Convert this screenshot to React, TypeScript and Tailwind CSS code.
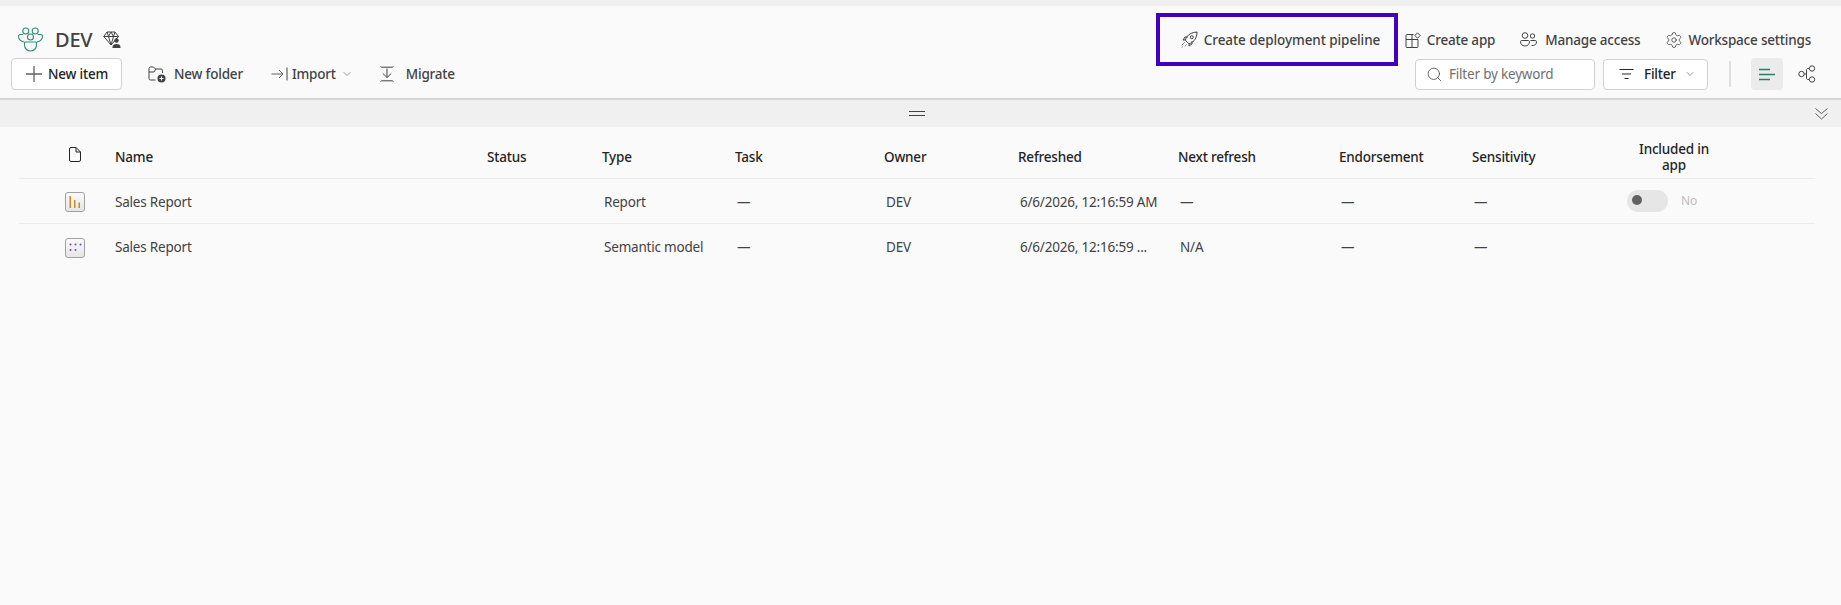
import React from "react";
import { ChevronDown, Search, Settings } from "lucide-react";

const font = { fontFamily: '"Noto Sans", "Open Sans", sans-serif' };

function Team() {
  return (
    <svg width="25" height="25" viewBox="0 0 25 25" fill="none" stroke="#2f8f78" strokeWidth="1.100">
      <circle cx="7.800" cy="4" r="3" />
      <circle cx="17.200" cy="4" r="3" />
      <circle cx="12.500" cy="10" r="3" />
      <path d="M5.200 7.500H2.200c-1 0-1.700.7-1.700 1.600 0 2.900 2 5.200 5.500 5.900" />
      <path d="M19.800 7.500h3c1 0 1.700.7 1.700 1.600 0 2.900-2 5.200-5.500 5.900" />
      <path d="M7.200 15h10.600c.4 0 .7.300.7.700v2.300c0 3.300-2.700 6-6 6s-6-2.700-6-6v-2.300c0-.4.300-.7.700-.7z" />
    </svg>
  );
}
function Diamond() {
  return (
    <svg width="18" height="17" viewBox="0 0 18 17" fill="none" stroke="#424242" strokeWidth="1">
      <path d="M4 1h8l3.500 4.500L8 14 .8 5.500z" />
      <path d="M.8 5.500h14.700M5.500 5.500 8 14l2.500-8.500M4 1l1.500 4.500L8 1l2.500 4.500L12 1" />
      <circle cx="13.500" cy="9.500" r="2.200" fill="#424242" stroke="none" />
      <path d="M9.500 16c0-2 1.500-3 4-3s4 1 4 3v1h-8z" fill="#424242" stroke="none" />
    </svg>
  );
}
function FolderAdd() {
  return (
    <svg width="18" height="17" viewBox="0 0 18 17" fill="none">
      <path d="M7.500 14H2.500A1.500 1.500 0 0 1 1 12.500v-10A1.500 1.500 0 0 1 2.500 1h3L7.500 3H13a1.500 1.500 0 0 1 1.500 1.500V7M1 6h5l2-3" stroke="#424242" strokeWidth="1" />
      <circle cx="13.500" cy="12.500" r="4" fill="#424242" />
      <path d="M13.500 10.500v4M11.500 12.500h4" stroke="#fff" strokeWidth="1" />
    </svg>
  );
}
function ImportIcon() {
  return (
    <svg width="17" height="16" viewBox="0 0 17 16" fill="none" stroke="#616161" strokeWidth="1">
      <path d="M.5 8h11M8 4l4 4-4 4" />
      <path d="M16 1.500v13" stroke="#424242" />
    </svg>
  );
}
function MigrateIcon() {
  return (
    <svg width="14" height="18" viewBox="0 0 14 18" fill="none" stroke="#424242" strokeWidth="1">
      <path d="M.500 1.500c.500.500 1 .7 1.500.7h10c.500 0 1-.2 1.500-.7M.500 16.500c.500-.500 1-.7 1.500-.7h10c.500 0 1 .2 1.500.7" />
      <path d="M7 3.500v9M2.800 8.500 7 12.500l4.200-4" />
    </svg>
  );
}
function Rocket() {
  return (
    <svg width="17" height="17" viewBox="0 0 17 17" fill="none" stroke="#424242" strokeWidth="1">
      <path d="M6 10.800 4.300 9.200c1-3.400 3.400-7.500 11.800-8.200-.6 8.400-4.800 10.800-8.200 11.800z" />
      <circle cx="10.800" cy="6.200" r="1.500" />
      <path d="M4.600 8.800 2 9l2-3h3M8.200 12.500 8 15l3-2v-3" />
      <path d="M3.500 11.500.8 14.200M5.500 13.500l-2 2M1.500 16 .8 16.500" strokeDasharray="1.500 1" />
    </svg>
  );
}
function AppIcon() {
  return (
    <svg width="16" height="16" viewBox="0 0 16 16" fill="none" stroke="#424242" strokeWidth="1">
      <path d="M8.500 2.500H2a1 1 0 0 0-1 1v11a1 1 0 0 0 1 1h10a1 1 0 0 0 1-1V7.500H1M7 2.500v13" />
      <path d="m12.500.8 2.700 2.700-2.700 2.700-2.700-2.700z" />
    </svg>
  );
}
function People() {
  return (
    <svg width="17" height="15" viewBox="0 0 17 15" fill="none" stroke="#424242" strokeWidth="1">
      <circle cx="5" cy="3.500" r="2.800" />
      <circle cx="12.500" cy="4" r="2.200" />
      <path d="M1.700 8.500h6.600c.6 0 1.200.5 1.200 1.200 0 2.300-1.800 4.300-4.500 4.300S.5 12 .5 9.700c0-.7.600-1.200 1.200-1.200z" />
      <path d="M11.500 13.500c2.800.4 5-1 5-3.700 0-.7-.5-1.300-1.200-1.300H10.500" />
    </svg>
  );
}
function FilterLines() {
  return (
    <svg width="15" height="12" viewBox="0 0 15 12" fill="none" stroke="#242424" strokeWidth="1">
      <path d="M.5 1.500h14M3 6h9M5.500 10.500h4" />
    </svg>
  );
}
function ListIcon() {
  return (
    <svg width="16" height="13" viewBox="0 0 16 13" fill="none" stroke="#2a7d6a" strokeWidth="1.500">
      <path d="M0 1.500h11M0 6.500h16M0 11.500h11" />
    </svg>
  );
}
function Lineage() {
  return (
    <svg width="18" height="18" viewBox="0 0 18 18" fill="none" stroke="#424242" strokeWidth="1">
      <circle cx="3.500" cy="9" r="2.700" />
      <circle cx="14" cy="3.500" r="2.700" />
      <circle cx="14" cy="14.500" r="2.700" />
      <path d="M6.200 9h2.300V5c0-1 .6-1.500 1.500-1.500h1.300M8.500 9v4c0 1 .6 1.500 1.500 1.500h1.300" />
    </svg>
  );
}
function FileIcon() {
  return (
    <svg width="12" height="15" viewBox="0 0 12 15" fill="none" stroke="#242424" strokeWidth="1">
      <path d="M2 .5h5L11.500 5v8A1.500 1.500 0 0 1 10 14.500H2A1.500 1.500 0 0 1 .5 13V2A1.500 1.500 0 0 1 2 .5zM7 .5V5h4.500" />
    </svg>
  );
}
function PlusIcon() {
  return (
    <svg width="16" height="16" viewBox="0 0 16 16" fill="none" stroke="#616161" strokeWidth="1.300">
      <path d="M8 0v16M0 8h16" />
    </svg>
  );
}
function DoubleChevron() {
  return (
    <svg width="13" height="12" viewBox="0 0 13 12" fill="none" stroke="#616161" strokeWidth="1">
      <path d="m.5.500 6 5 6-5M.5 5.500l6 5.500 6-5.500" />
    </svg>
  );
}
function TileReport() {
  return (
    <div className="flex h-5 w-5 items-center justify-center rounded-[3px] border border-[#a0a0a0] bg-gradient-to-b from-[#fafafa] to-[#e6e6e6]">
      <svg width="12" height="13" viewBox="0 0 12 13">
        <rect x="0.500" y="0" width="1.500" height="12" fill="#c58a2e" />
        <rect x="5" y="4" width="1.500" height="8" fill="#c58a2e" />
        <rect x="9.500" y="6.500" width="1.500" height="5.500" fill="#c58a2e" />
      </svg>
    </div>
  );
}
function TileModel() {
  return (
    <div className="flex h-5 w-5 items-center justify-center rounded-[3px] border border-[#a0a0a0] bg-gradient-to-b from-[#fafafa] to-[#e6e6e6]">
      <svg width="13" height="9" viewBox="0 0 13 9" fill="#7a45c0">
        <circle cx="1.500" cy="1.500" r="1" />
        <circle cx="6.500" cy="1.500" r="1" />
        <circle cx="11.500" cy="1.500" r="1" />
        <circle cx="1.500" cy="7" r="1" />
        <circle cx="6.500" cy="7" r="1" />
      </svg>
    </div>
  );
}

const gridCols = "grid grid-cols-[96px_372px_115px_133px_149px_134px_160px_161px_133px_148px_108px_87px]";

function Row({ icon, type, refreshed, next, toggle, last }: { icon: React.ReactNode; type: string; refreshed: string; next: string; toggle?: boolean; last?: boolean }) {
  return (
    <div className={`${gridCols} h-[45px] items-center pt-[2px] text-[13.5px] text-[#424242] ${last ? "" : "border-b border-[#ebebeb]"}`}>
      <div className="flex justify-end pr-[30px]">{icon}</div>
      <div>Sales Report</div>
      <div />
      <div className="pl-[2px]">{type}</div>
      <div className="pl-[2px]">—</div>
      <div className="pl-[2px]">DEV</div>
      <div className="pl-[2px]">{refreshed}</div>
      <div className="pl-[2px]">{next}</div>
      <div className="pl-[2px]">—</div>
      <div className="pl-[2px]">—</div>
      <div className="col-span-2">
        {toggle && (
          <div className="-mt-[3px] flex items-center gap-[13px] pl-[7px]">
            <div className="flex h-[22px] w-[41px] items-start rounded-full bg-[#e6e6e6] pl-[5px] pt-[5px]">
              <div className="h-[10px] w-[10px] rounded-full bg-[#616161]" />
            </div>
            <span className="text-[12px] text-[#bdbdbd]">No</span>
          </div>
        )}
      </div>
    </div>
  );
}

export default function App() {
  return (
    <div style={font} className="flex h-[605px] w-[1841px] flex-col overflow-hidden bg-[#fafafa] tracking-[-0.2px]">
      <div className="h-[6px] bg-[#f0f0f0]" />
      <header className="flex h-[94px] justify-between border-b-2 border-[#d6d6d6] pl-[11px] pr-[26px]">
        <div className="flex flex-col">
          <div className="mt-[17px] flex h-[35px] items-center pb-[2px] pl-[7px]">
            <Team />
            <span className="ml-[12px] text-[20px] font-medium text-[#424242]">DEV</span>
            <span className="ml-[11px]"><Diamond /></span>
          </div>
          <div className="flex h-[32px] items-center text-[13.5px] font-medium text-[#424242]">
            <button className="flex h-[32px] w-[111px] items-center rounded border border-[#d1d1d1] bg-white pl-[14px] text-[#242424]">
              <PlusIcon />
              <span className="ml-[6px]">New item</span>
            </button>
            <span className="ml-[26px]"><FolderAdd /></span>
            <span className="ml-[8px]">New folder</span>
            <span className="ml-[28px]"><ImportIcon /></span>
            <span className="ml-[4px]">Import</span>
            <ChevronDown size={12} strokeWidth={1.3} color="#616161" className="ml-[5px]" />
            <span className="ml-[27px]"><MigrateIcon /></span>
            <span className="ml-[12px]">Migrate</span>
          </div>
        </div>
        <div className="flex flex-col items-end">
          <div className="mr-[4px] mt-[7px] flex h-[53px] items-center text-[13.5px] font-medium text-[#424242]">
            <div className="flex h-[53px] w-[242px] items-center border-4 border-[#4100bd] pl-[21px]">
              <Rocket />
              <span className="ml-[6px] mt-[2px] tracking-[-0.08px]">Create deployment pipeline</span>
            </div>
            <span className="ml-[7px]"><AppIcon /></span>
            <span className="ml-[6px] mt-[2px]">Create app</span>
            <span className="ml-[25px]"><People /></span>
            <span className="ml-[8px] mt-[2px]">Manage access</span>
            <span className="ml-[25px]"><Settings size={18} strokeWidth={1.1} color="#424242" /></span>
            <span className="ml-[5px] mt-[2px]">Workspace settings</span>
          </div>
          <div className="-mt-[8px] flex h-[32px] items-center">
            <div className="flex h-[31px] w-[180px] items-center rounded border border-[#d1d1d1] bg-white pl-[10px] text-[13.5px] text-[#707070]">
              <Search size={17} strokeWidth={1.1} color="#424242" />
              <span className="ml-[6px]">Filter by keyword</span>
            </div>
            <div className="ml-[8px] flex h-[31px] w-[105px] items-center rounded border border-[#d1d1d1] bg-white pl-[15px] text-[13.5px] font-medium text-[#242424]">
              <FilterLines />
              <span className="ml-[10px]">Filter</span>
              <ChevronDown size={12} strokeWidth={1.3} color="#616161" className="ml-[8px]" />
            </div>
            <div className="ml-[21px] h-[26px] w-[2px] bg-[#e0e0e0]" />
            <div className="ml-[20px] flex h-[32px] w-[32px] items-center justify-center rounded bg-[#ebebeb]">
              <ListIcon />
            </div>
            <span className="ml-[15px] -mr-[1px]"><Lineage /></span>
          </div>
        </div>
      </header>
      <div className="relative flex h-[27px] items-center justify-center bg-[#f0f0f0]">
        <div className="-ml-[7px] h-[5px] w-[16px] border-y border-[#424242]" />
        <span className="absolute right-[13px] top-[8px]"><DoubleChevron /></span>
      </div>
      <div className="pl-[19px] pr-[26px]">
        <div className={`${gridCols} h-[52px] items-center border-b border-[#ebebeb] text-[13.5px] font-medium text-[#242424]`}>
          <div className="flex justify-end pr-[34px] pt-[4px]"><FileIcon /></div>
          <div className="pt-[9px]">Name</div>
          <div className="pt-[9px]">Status</div>
          <div className="pt-[9px]">Type</div>
          <div className="pt-[9px]">Task</div>
          <div className="pt-[9px]">Owner</div>
          <div className="pt-[9px]">Refreshed</div>
          <div className="pt-[9px]">Next refresh</div>
          <div className="pt-[9px]">Endorsement</div>
          <div className="pt-[9px]">Sensitivity</div>
          <div className="px-[16px] pt-[9px] text-center leading-[16px]">Included in app</div>
          <div />
        </div>
        <Row icon={<TileReport />} type="Report" refreshed="6/6/2026, 12:16:59 AM" next="—" toggle />
        <Row icon={<TileModel />} type="Semantic model" refreshed="6/6/2026, 12:16:59 ..." next="N/A" last />
      </div>
    </div>
  );
}
